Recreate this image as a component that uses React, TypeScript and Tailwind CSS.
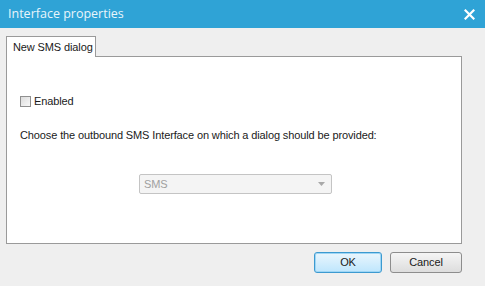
import React, { useState } from 'react';

export default function App() {
  const [enabled, setEnabled] = useState(false);

  return (
    <div className="w-[485px] h-[286px] bg-[#efefef] flex flex-col overflow-hidden font-['Liberation_Sans',Arial,sans-serif] text-[11px] tracking-[-0.12px] text-[#1a1a1a]">
      {/* Title bar */}
      <div className="h-[28px] bg-[#2fa3d6] flex items-center justify-between pl-[8px] pr-[10px]">
        <span className="text-[12.5px] tracking-normal text-[#e8f5fb] font-['Open_Sans',sans-serif]">Interface properties</span>
        <svg width="11" height="11" viewBox="0 0 11 11">
          <path d="M1.5 1.5 L9.5 9.5 M9.5 1.5 L1.5 9.5" stroke="#ffffff" strokeWidth="2.2" strokeLinecap="square" />
        </svg>
      </div>

      <div className="flex flex-col pl-[6px] pr-[23px] pt-[8px]">
        {/* Tabs */}
        <div className="flex">
          <div className="relative z-10 -mb-px h-[21px] w-[90px] bg-white border border-[#9a9a9a] border-b-0 flex items-center pl-[6px] whitespace-nowrap">
            New SMS dialog
          </div>
        </div>

        {/* Panel */}
        <div className="h-[188px] bg-white border border-[#9a9a9a] flex flex-col pl-[13px]">
          <label className="flex items-center gap-[3px] mt-[36px]">
            <input
              type="checkbox"
              checked={enabled}
              onChange={(e) => setEnabled(e.target.checked)}
              className="appearance-none w-[11px] h-[11px] border border-[#8f8f8f] bg-gradient-to-br from-[#dcdcdc] to-[#f8f8f8] m-0"
            />
            <span>Enabled</span>
          </label>

          <div className="mt-[17px] whitespace-nowrap">Choose the outbound SMS Interface on which a dialog should be provided:</div>

          <div className="mt-[31px] ml-[119px] w-[193px] h-[20px] border border-[#c4c4c4] rounded-[2px] bg-[#f4f4f4] flex items-center justify-between pl-[4px] pr-[6px] text-[#a0a0a0]">
            <span>SMS</span>
            <svg width="7" height="4" viewBox="0 0 7 4">
              <path d="M0 0 L7 0 L3.5 4 Z" fill="#a8a8a8" />
            </svg>
          </div>
        </div>

        {/* Buttons */}
        <div className="flex justify-end gap-[8px] mt-[8px]">
          <button className="w-[68px] h-[21px] rounded-[3px] border border-[#3c9ad0] bg-gradient-to-b from-[#eaf6fd] to-[#bee6fd] shadow-[inset_0_0_0_1px_#9fd6f5] text-[11px]">
            OK
          </button>
          <button className="w-[72px] h-[21px] rounded-[3px] border border-[#8d8d8d] bg-gradient-to-b from-[#f5f5f5] to-[#dddddd] text-[11px]">
            Cancel
          </button>
        </div>
      </div>
    </div>
  );
}
